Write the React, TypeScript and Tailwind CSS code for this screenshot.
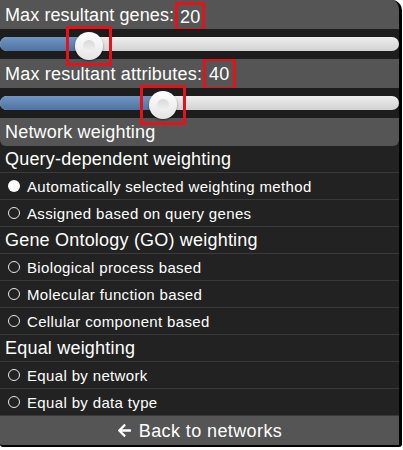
import React from "react";
import { FaArrowLeft } from "react-icons/fa";

const font = { fontFamily: '"Liberation Sans", Arial, sans-serif' };

function Radio({ checked, label }: { checked?: boolean; label: string }) {
  return (
    <div className="h-[27px] flex items-center border-b border-[#3a3a3a] pl-[8px] gap-[7px]">
      <span
        className={
          checked
            ? "w-[12px] h-[12px] rounded-full bg-white"
            : "w-[12px] h-[12px] rounded-full border border-[#e8e8e8]"
        }
      />
      <span className="text-[15px] tracking-[0.35px] text-white leading-none">{label}</span>
    </div>
  );
}

function SectionTitle({ children }: { children: React.ReactNode }) {
  return (
    <div className="h-[27px] flex items-center border-b border-[#3a3a3a] pl-[5px] text-[18px] tracking-[0.2px] text-white leading-none">
      {children}
    </div>
  );
}

function Knob() {
  return (
    <div className="w-[28px] h-[28px] rounded-full bg-gradient-to-b from-white to-[#e4e4e4] shadow-[0_1px_2px_rgba(0,0,0,0.5)] flex items-center justify-center">
      <div className="w-[12px] h-[12px] rounded-full bg-gradient-to-b from-[#d8d8d8] to-[#f2f2f2]" />
    </div>
  );
}

function Slider({ fill, boxLeft }: { fill: string; boxLeft: string }) {
  return (
    <div className="h-[30px] bg-[#1d1d1d] relative pt-[8px]">
      <div className="h-[14px] w-[399px] rounded-full bg-gradient-to-b from-[#eeeeee] to-[#d2d2d2] flex overflow-hidden">
        <div className={`${fill} h-full bg-gradient-to-b from-[#7195c2] to-[#4f74a2]`} />
      </div>
      <div className={`absolute ${boxLeft} top-[-3px] w-[46px] h-[40px] border-[3px] border-[#e3121b] flex items-center justify-center`}>
        <Knob />
      </div>
    </div>
  );
}

export default function App() {
  return (
    <div className="w-[403px] h-[450px] bg-white" style={font}>
      <div className="w-[402px] h-[447px] bg-[#222222] rounded-tr-[10px] rounded-bl-[3px] rounded-br-[3px] border-r-[3px] border-b-[2px] border-black overflow-hidden flex flex-col">
        <div className="h-[29px] bg-[#555555] flex items-center pl-[5px] text-[18px] tracking-[0.1px] text-white leading-none">
          <span>Max resultant genes:</span>
          <span className="relative top-[2px] ml-[1px] border-[3px] border-[#e3121b] px-[2px] h-[29px] flex items-center">20</span>
        </div>
        <Slider fill="w-[89px]" boxLeft="left-[66px]" />
        <div className="h-[29px] bg-[#555555] flex items-center pl-[5px] text-[18px] tracking-[0.2px] text-white leading-none">
          <span>Max resultant attributes:</span>
          <span className="ml-[1px] border-[3px] border-[#e3121b] px-[3px] h-[32px] flex items-center">40</span>
        </div>
        <Slider fill="w-[164px]" boxLeft="left-[140px]" />
        <div className="h-[28px] bg-[#555555] flex items-center pl-[5px] text-[18px] tracking-[0.2px] text-white leading-none rounded-b-[6px]">
          Network weighting
        </div>
        <SectionTitle>Query-dependent weighting</SectionTitle>
        <Radio checked label="Automatically selected weighting method" />
        <Radio label="Assigned based on query genes" />
        <SectionTitle>Gene Ontology (GO) weighting</SectionTitle>
        <Radio label="Biological process based" />
        <Radio label="Molecular function based" />
        <Radio label="Cellular component based" />
        <SectionTitle>Equal weighting</SectionTitle>
        <Radio label="Equal by network" />
        <Radio label="Equal by data type" />
        <div className="flex-1 bg-[#555555] flex items-center justify-center gap-[7px] text-[18px] tracking-[0.4px] text-white leading-none">
          <FaArrowLeft className="w-[15px] h-[15px]" />
          <span>Back to networks</span>
        </div>
      </div>
    </div>
  );
}
